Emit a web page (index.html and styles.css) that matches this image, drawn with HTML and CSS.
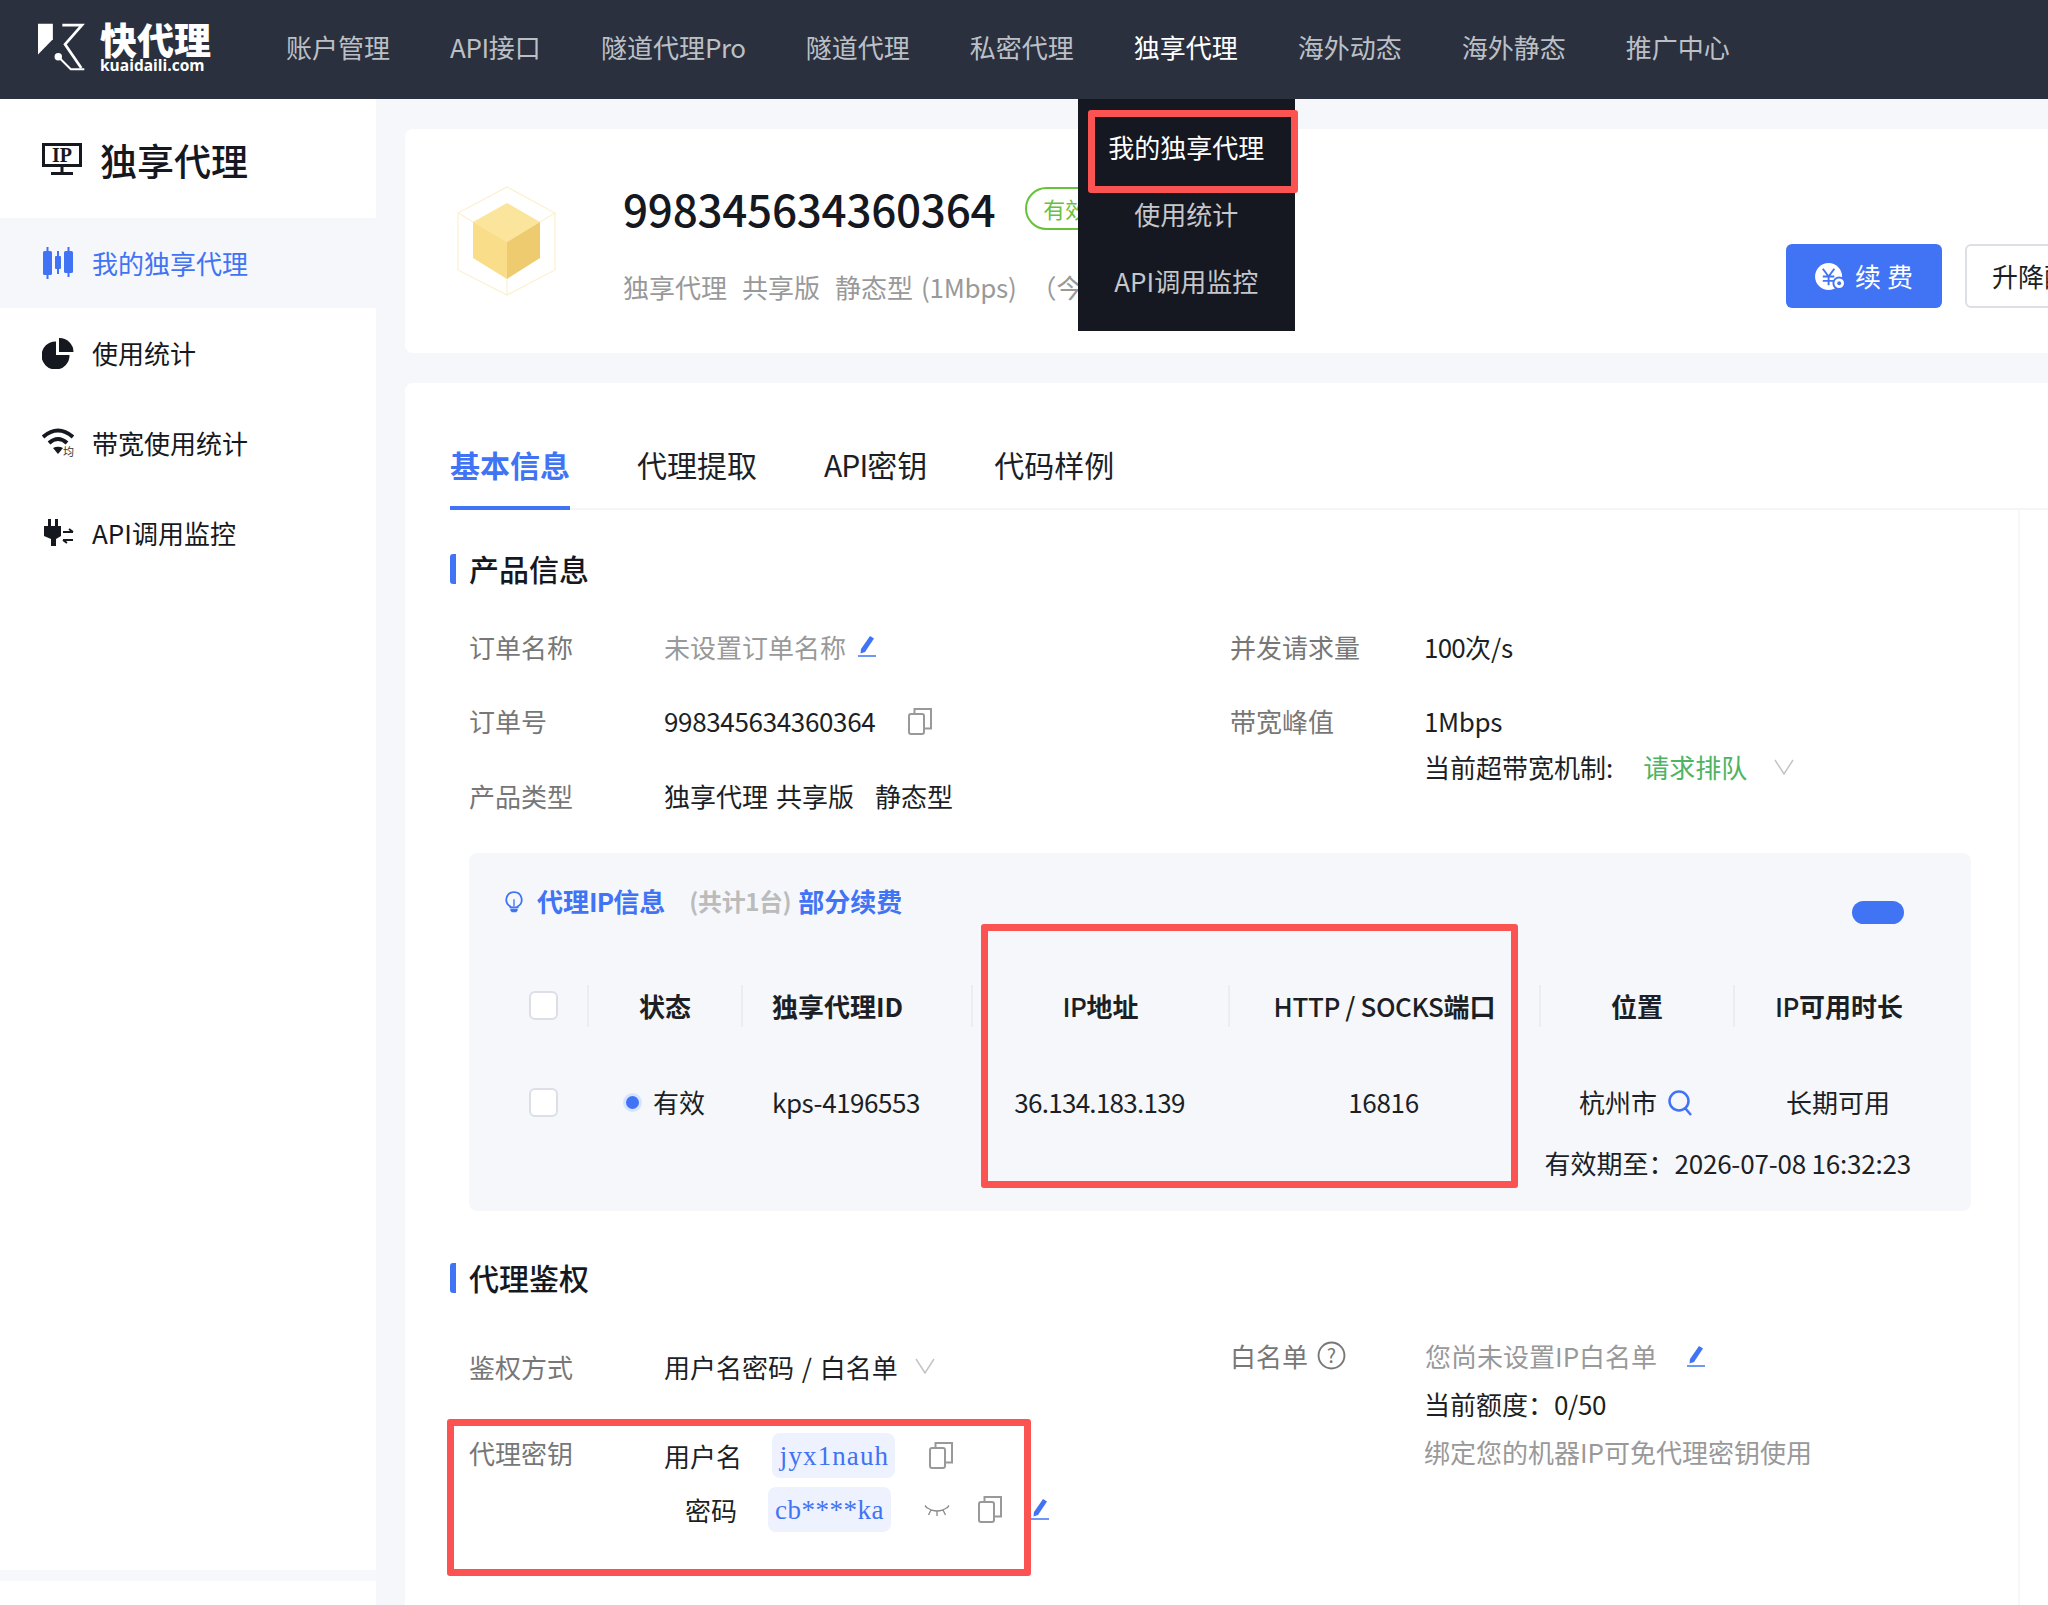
FILE: index.html
```html
<!DOCTYPE html>
<html lang="zh-CN">
<head>
<meta charset="utf-8">
<title>独享代理</title>
<link rel="stylesheet" href="styles.css">
</head>
<body>
<header class="nav">
  <div class="logo">
    <svg class="logo-mark" viewBox="28 25 142 142" aria-hidden="true">
      <path d="M28 27H72V73L28 118Z" fill="#fff"/>
      <path d="M100 31H158L108 88L156 158" fill="none" stroke="#fff" stroke-width="8"/>
      <circle cx="88" cy="125" r="11" fill="#fff"/>
      <path d="M88 125L125 162H165" fill="none" stroke="#fff" stroke-width="6"/>
    </svg>
    <div class="logo-text">
      <div class="logo-cn">快代理</div>
      <div class="logo-en">kuaidaili.com</div>
    </div>
  </div>
  <nav class="menu">
    <a class="menu-item">账户管理</a>
    <a class="menu-item"><span class="lat-api">API</span>接口</a>
    <a class="menu-item">隧道代理<span class="lat-pro">Pro</span></a>
    <a class="menu-item">隧道代理</a>
    <a class="menu-item">私密代理</a>
    <div class="menu-item active">独享代理
      <div class="dropdown">
        <div class="drop-item current">我的独享代理<span class="mark mark-drop"></span></div>
        <div class="drop-item">使用统计</div>
        <div class="drop-item">API调用监控</div>
      </div>
    </div>
    <a class="menu-item">海外动态</a>
    <a class="menu-item">海外静态</a>
    <a class="menu-item">推广中心</a>
  </nav>
</header>

<div class="layout">
  <aside class="sidebar">
    <div class="side-title">
      <svg class="side-title-icon" viewBox="0 0 40 32" aria-hidden="true">
        <rect x="1.500" y="1.500" width="37" height="21" fill="none" stroke="#15181f" stroke-width="3"/>
        <text x="20" y="18.500" text-anchor="middle" class="ip-glyph">IP</text>
        <path d="M20 23V30M9 30.500H31" fill="none" stroke="#15181f" stroke-width="3"/>
      </svg>
      <span>独享代理</span>
    </div>
    <a class="side-item on">
      <svg class="side-icon" viewBox="0 0 32 32" aria-hidden="true"><g fill="#4173f5"><rect x="1" y="4" width="9" height="24" rx="1.500"/><rect x="4.500" y="0" width="2" height="32"/><rect x="13" y="9" width="6" height="13" rx="1"/><rect x="15" y="4" width="2" height="23"/><rect x="22" y="4" width="9" height="22" rx="1.500"/><rect x="25.500" y="0" width="2" height="30"/></g></svg>
      <span>我的独享代理</span>
    </a>
    <a class="side-item">
      <svg class="side-icon" viewBox="0 0 32 32" aria-hidden="true"><path d="M14 4.500V18H27.500A14 14 0 1 1 14 4.500Z" fill="#15181f"/><path d="M17 1A14 14 0 0 1 31.500 15H17Z" fill="#15181f"/></svg>
      <span>使用统计</span>
    </a>
    <a class="side-item">
      <svg class="side-icon" viewBox="0 0 32 32" aria-hidden="true"><path d="M1 10Q16-3 31 10" fill="none" stroke="#15181f" stroke-width="4"/><path d="M7 16Q16 8 25 16" fill="none" stroke="#15181f" stroke-width="4"/><path d="M11 21Q16 18.500 21 21L16 27Z" fill="#15181f"/><text x="21" y="29" class="avg-glyph">均</text></svg>
      <span>带宽使用统计</span>
    </a>
    <a class="side-item">
      <svg class="side-icon" viewBox="0 0 32 32" aria-hidden="true"><path d="M6 2H9V9H13V2H16V9H19V19L14 22V29H9V22L2 19V9H6Z" fill="#15181f"/><path d="M21 15H31M27 12L31 15M31 23H21M25 26L21 23" fill="none" stroke="#15181f" stroke-width="2"/></svg>
      <span>API调用监控</span>
    </a>
    <div class="side-band"></div>
  </aside>

  <main class="main">
    <section class="card head-card">
      <svg class="cube" viewBox="0 0 104 112" aria-hidden="true">
        <path d="M51 2L99 28V85L51 110L2 85V28Z" fill="none" stroke="#fdf0cf" stroke-width="1.200"/>
        <path d="M2 28L51 57L99 28M51 57V110" fill="none" stroke="#fdf0cf" stroke-width="1.200"/>
        <path d="M51 18L84 37L51 57L17 37Z" fill="#fbe59c"/>
        <path d="M17 37L51 57V94L17 73Z" fill="#fadd88"/>
        <path d="M84 37L51 57V94L84 73Z" fill="#eecb6e"/>
      </svg>
      <div class="head-info">
        <div class="order-line">
          <span class="order-no">998345634360364</span>
          <span class="badge">有效</span>
        </div>
        <div class="order-sub"><span class="sub-part">独享代理</span><span class="sub-part">共享版</span><span class="sub-type">静态型</span><span class="sub-rate">(1Mbps)</span><span>（今日到期）</span></div>
      </div>
      <div class="head-actions">
        <button class="btn btn-primary">
          <svg class="yen" viewBox="0 0 32 28" aria-hidden="true"><circle cx="14" cy="14" r="14" fill="#fff"/><path d="M8 6L14 14L20 6M14 14V23M8 14H20M8 18.500H20" fill="none" stroke="#4173f5" stroke-width="2"/><circle cx="25" cy="21" r="6" fill="#fff" stroke="#4173f5" stroke-width="2"/><circle cx="25" cy="21" r="2" fill="#4173f5"/></svg>
          <span>续 费</span>
        </button>
        <button class="btn btn-plain">升降配</button>
      </div>
    </section>

    <section class="card detail-card">
      <div class="tabs">
        <a class="tab on">基本信息</a>
        <a class="tab">代理提取</a>
        <a class="tab"><span class="lat-tab">API</span>密钥</a>
        <a class="tab">代码样例</a>
      </div>
      <div class="tab-body">
        <h2 class="sec-title">产品信息</h2>
        <div class="info">
          <div class="col-left">
            <div class="row"><span class="label">订单名称</span><span class="muted">未设置订单名称</span>
              <svg class="ico-edit edit-name" viewBox="0 0 18 22" aria-hidden="true"><path d="M12 1L16 3.500L7 17L2.500 18.500L3 14Z" fill="#4173f5"/><path d="M0 21H18" stroke="#4173f5" stroke-width="1.500"/></svg>
            </div>
            <div class="row"><span class="label">订单号</span><span class="num">998345634360364</span>
              <svg class="ico-copy copy-order" viewBox="0 0 24 27" aria-hidden="true"><use href="#copy"/></svg>
            </div>
            <div class="row"><span class="label">产品类型</span><span class="type-a">独享代理</span><span class="type-b">共享版</span><span>静态型</span></div>
          </div>
          <div>
            <div class="row"><span class="label">并发请求量</span><span><span class="num-tight">100</span>次/s</span></div>
            <div class="row"><span class="label">带宽峰值</span><span class="num">1Mbps</span></div>
            <div class="sub-row">
              <span>当前超带宽机制:</span><span class="green">请求排队</span>
              <svg class="ico-chev" viewBox="0 0 20 16" aria-hidden="true"><path d="M1 1L10 15L19 1" fill="none" stroke="#c4c4c4" stroke-width="1.500"/></svg>
            </div>
          </div>
        </div>

        <div class="panel">
          <div class="panel-title">
            <svg class="bulb" viewBox="0 0 20 24" aria-hidden="true"><path d="M10 1A8.500 8.500 0 0 1 14 17V18H6V17A8.500 8.500 0 0 1 10 1Z" fill="none" stroke="#4173f5" stroke-width="2"/><path d="M10 9V17" stroke="#4173f5" stroke-width="1.500"/><path d="M6 19.500H14V21.500L12.500 23.500H7.500L6 21.500Z" fill="#4173f5"/></svg>
            <span class="pt-blue"><span>代理</span><span class="lat-ip">IP</span><span>信息</span></span>
            <span class="pt-gray">(共计1台)</span>
            <span class="pt-blue">部分续费</span>
            <span class="pill"></span>
          </div>
          <div class="ip-table">
            <div class="th th-check"><span class="check"></span></div>
            <div class="th">状态</div>
            <div class="th th-left">独享代理ID</div>
            <div class="th"><span class="th-lat">IP</span>地址</div>
            <div class="th"><span class="th-lat">HTTP / SOCKS</span>端口</div>
            <div class="th">位置</div>
            <div class="th"><span class="th-lat">IP</span>可用时长</div>

            <div class="td td-check"><span class="check"></span></div>
            <div class="td"><span class="dot"></span>有效</div>
            <div class="td td-left kps">kps-4196553</div>
            <div class="td ip-num">36.134.183.139</div>
            <div class="td num">16816</div>
            <div class="td">杭州市
              <svg class="ico-search" viewBox="0 0 26 28" aria-hidden="true"><circle cx="12" cy="12" r="9.500" fill="none" stroke="#4173f5" stroke-width="2.500"/><path d="M18 19L24 26" stroke="#4173f5" stroke-width="2.500"/></svg>
            </div>
            <div class="td">长期可用</div>
            <div class="td-expire">有效期至：<span class="date">2026-07-08 16:32:23</span></div>
          </div>
          <span class="mark mark-table"></span>
        </div>

        <div class="auth">
          <h2 class="sec-title">代理鉴权</h2>
          <div class="auth-grid">
            <div class="auth-left col-left">
              <div class="auth-method"><span class="label">鉴权方式</span><span class="auth-value">用户名密码 / 白名单</span>
                <svg class="ico-chev chev-auth" viewBox="0 0 20 16" aria-hidden="true"><path d="M1 1L10 15L19 1" fill="none" stroke="#c4c4c4" stroke-width="1.500"/></svg>
              </div>
              <div class="auth-keys">
                <span class="label">代理密钥</span>
                <div>
                  <div class="key-row">
                    <span class="key-name">用户名</span><span class="chip chip-user">jyx1nauh</span>
                    <svg class="ico-copy copy-user" viewBox="0 0 24 27" aria-hidden="true"><use href="#copy"/></svg>
                  </div>
                  <div class="key-row key-row-pass">
                    <span class="key-name">密码</span><span class="chip chip-pass">cb****ka</span>
                    <svg class="ico-eye" viewBox="0 0 26 12" aria-hidden="true"><path d="M2 2Q13 10 24 2M13 6.500V11M7 5L4.500 10M19 5L21.500 10M1 0.500L3 3M25 0.500L23 3" fill="none" stroke="#888" stroke-width="1.300"/></svg>
                    <svg class="ico-copy copy-pass" viewBox="0 0 24 27" aria-hidden="true"><use href="#copy"/></svg>
                    <svg class="ico-edit edit-pass" viewBox="0 0 18 22" aria-hidden="true"><path d="M12 1L16 3.500L7 17L2.500 18.500L3 14Z" fill="#4173f5"/><path d="M0 21H18" stroke="#4173f5" stroke-width="1.500"/></svg>
                  </div>
                </div>
              </div>
            </div>
            <div class="auth-right">
              <div class="wl-row"><span class="wl-label">白名单</span>
                <svg class="ico-help" viewBox="0 0 28 28" aria-hidden="true"><circle cx="14" cy="14" r="12.500" fill="none" stroke="#777" stroke-width="1.800"/><text x="14" y="21" text-anchor="middle" class="help-glyph">?</text></svg>
                <span class="muted wl-value">您尚未设置IP白名单</span>
                <svg class="ico-edit edit-wl" viewBox="0 0 18 22" aria-hidden="true"><path d="M12 1L16 3.500L7 17L2.500 18.500L3 14Z" fill="#4173f5"/><path d="M0 21H18" stroke="#4173f5" stroke-width="1.500"/></svg>
              </div>
              <div class="wl-line">当前额度：<span class="num">0/50</span></div>
              <div class="wl-line muted">绑定您的机器IP可免代理密钥使用</div>
            </div>
          </div>
          <span class="mark mark-auth"></span>
        </div>
      </div>
    </section>
  </main>
</div>

<svg class="defs" aria-hidden="true"><defs><g id="copy" fill="none" stroke="#999" stroke-width="2"><rect x="1" y="6" width="15" height="20" rx="2"/><path d="M6.500 6V1H23V20.500L16 20.500"/></g></defs></svg>
</body>
</html>
```

FILE: styles.css
```css
* { box-sizing: border-box; }
html, body { margin: 0; padding: 0; }
body {
  width: 2048px;
  height: 1605px;
  overflow: hidden;
  background: #f5f7fa;
  color: #1c1f26;
  font-family: "Noto Sans CJK SC", "Noto Sans", sans-serif;
  font-size: 26px;
  line-height: 40px;
}
svg { display: block; flex: none; }
.defs { width: 0; height: 0; }
h2 { margin: 0; font-weight: 500; }
.num { letter-spacing: -0.340px; }
.num-tight { letter-spacing: -0.800px; }
.date { letter-spacing: -0.200px; }
.kps { letter-spacing: -0.450px; }
.ip-num { letter-spacing: -0.700px; }

/* top bar */
.nav { height: 99px; display: flex; background: #2a303e; }
.logo { width: 218px; flex: none; margin-left: 38px; display: flex; gap: 14px; padding-top: 21px; color: #fff; }
.logo-mark { width: 48px; height: 48px; margin-top: 2px; }
.logo-cn { font-size: 37px; font-weight: 900; line-height: 37px; white-space: nowrap; }
.logo-en { font-family: "Open Sans", sans-serif; font-size: 15.500px; font-weight: 700; line-height: 14px; white-space: nowrap; }
.menu { display: flex; }
.menu-item { position: relative; padding: 0 30px; height: 99px; line-height: 94px; color: #bcc0c6; white-space: nowrap; }
.menu-item.active { color: #fff; }
.lat-api { letter-spacing: -0.350px; }
.lat-pro { letter-spacing: -0.400px; }

.dropdown { position: absolute; left: -26px; top: 99px; width: 217px; height: 232px; padding-top: 17px; background: #151821; z-index: 5; text-align: center; line-height: 62px; }
.drop-item { position: relative; height: 67px; color: #c6c7ca; }
.drop-item.current { color: #fff; }

.mark { position: absolute; border: 7px solid #fb5252; border-radius: 3px; pointer-events: none; }
.mark-drop { left: 10px; top: -6px; width: 210px; height: 83px; }
.mark-table { left: 512px; top: 71px; width: 537px; height: 264px; }
.mark-auth { left: -3px; top: 156px; width: 584px; height: 157px; }

/* sidebar */
.layout { display: flex; height: 1506px; }
.sidebar { width: 376px; flex: none; background: #fff; display: flex; flex-direction: column; }
.side-title { height: 119px; display: flex; gap: 18px; padding: 43px 0 0 42px; font-size: 37px; line-height: 36px; color: #15181f; font-weight: 500; }
.side-title-icon { width: 40px; height: 32px; margin-top: 1px; }
.ip-glyph { font-family: "Liberation Serif", serif; font-weight: 700; font-size: 20px; fill: #15181f; }
.side-item { height: 90px; display: flex; align-items: center; gap: 18px; padding-left: 42px; color: #15181f; }
.side-item.on { background: #f5f7fa; color: #4173f5; }
.side-icon { width: 32px; height: 32px; }
.avg-glyph { font-size: 11px; fill: #333; }
.side-band { margin-top: auto; margin-bottom: 24px; height: 11px; background: #f7f8fb; }

/* main column */
.main { flex: 1; min-width: 0; padding: 30px 0 0 29px; overflow: hidden; }
.card { background: #fff; border-radius: 8px 0 0 8px; width: 1700px; }
.head-card { height: 224px; display: grid; grid-template-columns: 167px 1163px auto; padding-left: 51px; }
.cube { width: 104px; height: 112px; margin-top: 56px; }
.head-info { padding-top: 49px; }
.order-line { display: flex; align-items: center; height: 60px; }
.order-no { font-size: 44px; font-weight: 500; color: #15181f; line-height: 60px; letter-spacing: -0.260px; }
.badge { margin-left: 30px; width: 90px; height: 43px; padding-left: 16px; border: 2px solid #67c23a; border-radius: 22px; color: #67c23a; font-size: 22px; line-height: 39px; }
.order-sub { margin-top: 29px; color: #999; white-space: nowrap; }
.sub-part { margin-right: 15px; }
.sub-type { margin-right: 8px; }
.sub-rate { margin-right: 14px; letter-spacing: -0.300px; }
.head-actions { display: flex; gap: 23px; padding-top: 115px; }
.btn { height: 64px; border-radius: 6px; font: inherit; padding: 0; white-space: nowrap; }
.btn-primary { width: 156px; display: flex; align-items: center; justify-content: center; gap: 9px; border: 0; background: #4173f5; color: #fff; }
.yen { width: 31px; height: 27px; }
.btn-plain { width: 140px; padding-left: 25px; text-align: left; border: 2px solid #dcdfe6; background: #fff; color: #1c1f26; }

/* tabs */
.detail-card { margin-top: 30px; height: 1300px; padding: 62px 0 0 45px; }
.tabs { display: flex; gap: 67px; height: 65px; border-bottom: 2px solid #f5f5f6; }
.tab { height: 65px; font-size: 30px; line-height: 39px; color: #1c1f26; }
.tab.on { color: #4173f5; font-weight: 700; border-bottom: 4px solid #4173f5; }
.lat-tab { letter-spacing: -0.900px; }

.tab-body { width: 1570px; padding-top: 44px; border-right: 2px solid #f5f7fa; height: 1200px; }
.sec-title { height: 30px; line-height: 29px; font-size: 30px; color: #15181f; border-left: 6px solid #4173f5; border-radius: 3px 0 0 3px; padding-left: 13px; }

/* info rows */
.info { display: grid; grid-template-columns: 760px 1fr; margin: 27px 0 0 20px; }
.row { height: 74.500px; padding-bottom: 3px; display: flex; align-items: center; white-space: nowrap; }
.label { width: 194px; flex: none; color: #777; }
.col-left .label { width: 195px; margin-left: -1px; }
.muted { color: #999; }
.green { color: #4cb464; margin-left: 30px; }
.sub-row { display: flex; align-items: center; margin: -13px 0 0 194px; height: 40px; white-space: nowrap; }
.type-a { margin-right: 8px; }
.type-b { margin-right: 21px; }

.ico-edit { width: 18px; height: 22px; }
.ico-copy { width: 24px; height: 27px; }
.ico-chev { width: 20px; height: 16px; margin-left: 27px; }
.edit-name { margin-left: 12px; margin-top: -2px; }
.copy-order { margin-left: 33px; }

/* ip panel */
.panel { position: relative; margin: 18px 0 0 19px; width: 1502px; height: 358px; background: #f5f7fa; border-radius: 8px; padding-top: 32px; }
.panel-title { display: flex; align-items: flex-start; height: 36px; padding-left: 34px; font-weight: 700; line-height: 31px; }
.bulb { width: 18px; height: 24px; margin: 5px 14px 0 2px; }
.pt-blue { color: #4173f5; }
.lat-ip { letter-spacing: -0.800px; }
.pt-gray { color: #bbb; margin: 0 7px 0 24px; font-size: 24px; letter-spacing: -0.400px; }
.pill { margin: 16px 67px 0 auto; width: 52px; height: 23px; border-radius: 12px; background: #4173f5; }
.ip-table { display: grid; grid-template-columns: 118px 154px 230px 257px 311px 194px 210px; margin-top: 39px; }
.th { height: 42px; margin: 25px 0 30px; display: flex; align-items: center; justify-content: center; border-left: 2px solid #ebedf0; font-weight: 700; white-space: nowrap; }
.th-lat { font-weight: 500; letter-spacing: -0.400px; }
.th-check { border-left: 0; justify-content: flex-start; padding-left: 60px; }
.th-left { justify-content: flex-start; padding-left: 29px; }
.td { height: 96px; padding-bottom: 5px; display: flex; align-items: center; justify-content: center; white-space: nowrap; }
.td-check { justify-content: flex-start; padding-left: 60px; padding-bottom: 5px; }
.td-left { justify-content: flex-start; padding-left: 31px; }
.check { width: 29px; height: 29px; background: #fff; border: 2px solid #dcdfe6; border-radius: 6px; }
.dot { width: 19px; height: 19px; margin-right: 11px; border-radius: 50%; background: #4173f5; border: 3.500px solid #d8e4fd; }
.ico-search { width: 26px; height: 28px; margin-left: 10px; margin-top: 2px; }
.td-expire { grid-column: 6 / 8; margin-top: -10px; text-align: right; padding-right: 32px; white-space: nowrap; }

/* auth */
.auth { position: relative; margin-top: 52px; }
.auth-grid { display: grid; grid-template-columns: 780px 1fr; }
.auth-left { padding: 54px 0 0 20px; }
.auth-method { display: flex; align-items: center; height: 40px; }
.auth-value { word-spacing: 2px; }
.chev-auth { margin-left: 17px; margin-top: -2px; }
.auth-keys { display: flex; margin-top: 46px; }
.key-row { display: flex; align-items: center; height: 45px; white-space: nowrap; }
.key-row-pass { margin-top: 9px; }
.key-name { width: 75px; text-align: right; margin-top: 2px; }
.key-row-pass .key-name { width: 73px; }
.chip { width: 123px; height: 45px; border-radius: 8px; background: #edf2fe; color: #4173f5; text-align: center; font-family: "Liberation Serif", serif; font-size: 27px; line-height: 46px; letter-spacing: 1.100px; }
.chip-user { margin-left: 33px; padding-left: 2px; }
.chip-pass { margin-left: 31px; letter-spacing: 0.500px; }
.copy-user { margin-left: 34px; }
.ico-eye { width: 26px; height: 12px; margin: 3px 0 0 33px; }
.copy-pass { margin-left: 28px; }
.edit-pass { margin-left: 29px; }
.auth-right { padding-top: 39px; }
.wl-row { display: flex; align-items: center; height: 48px; white-space: nowrap; }
.wl-label { color: #777; }
.ico-help { width: 29px; height: 29px; margin-left: 9px; margin-top: -1px; }
.help-glyph { font-size: 19px; fill: #777; }
.wl-value { margin-left: 79px; }
.edit-wl { margin-left: 30px; }
.wl-line { height: 48px; line-height: 48px; margin-left: 194px; white-space: nowrap; }
```
